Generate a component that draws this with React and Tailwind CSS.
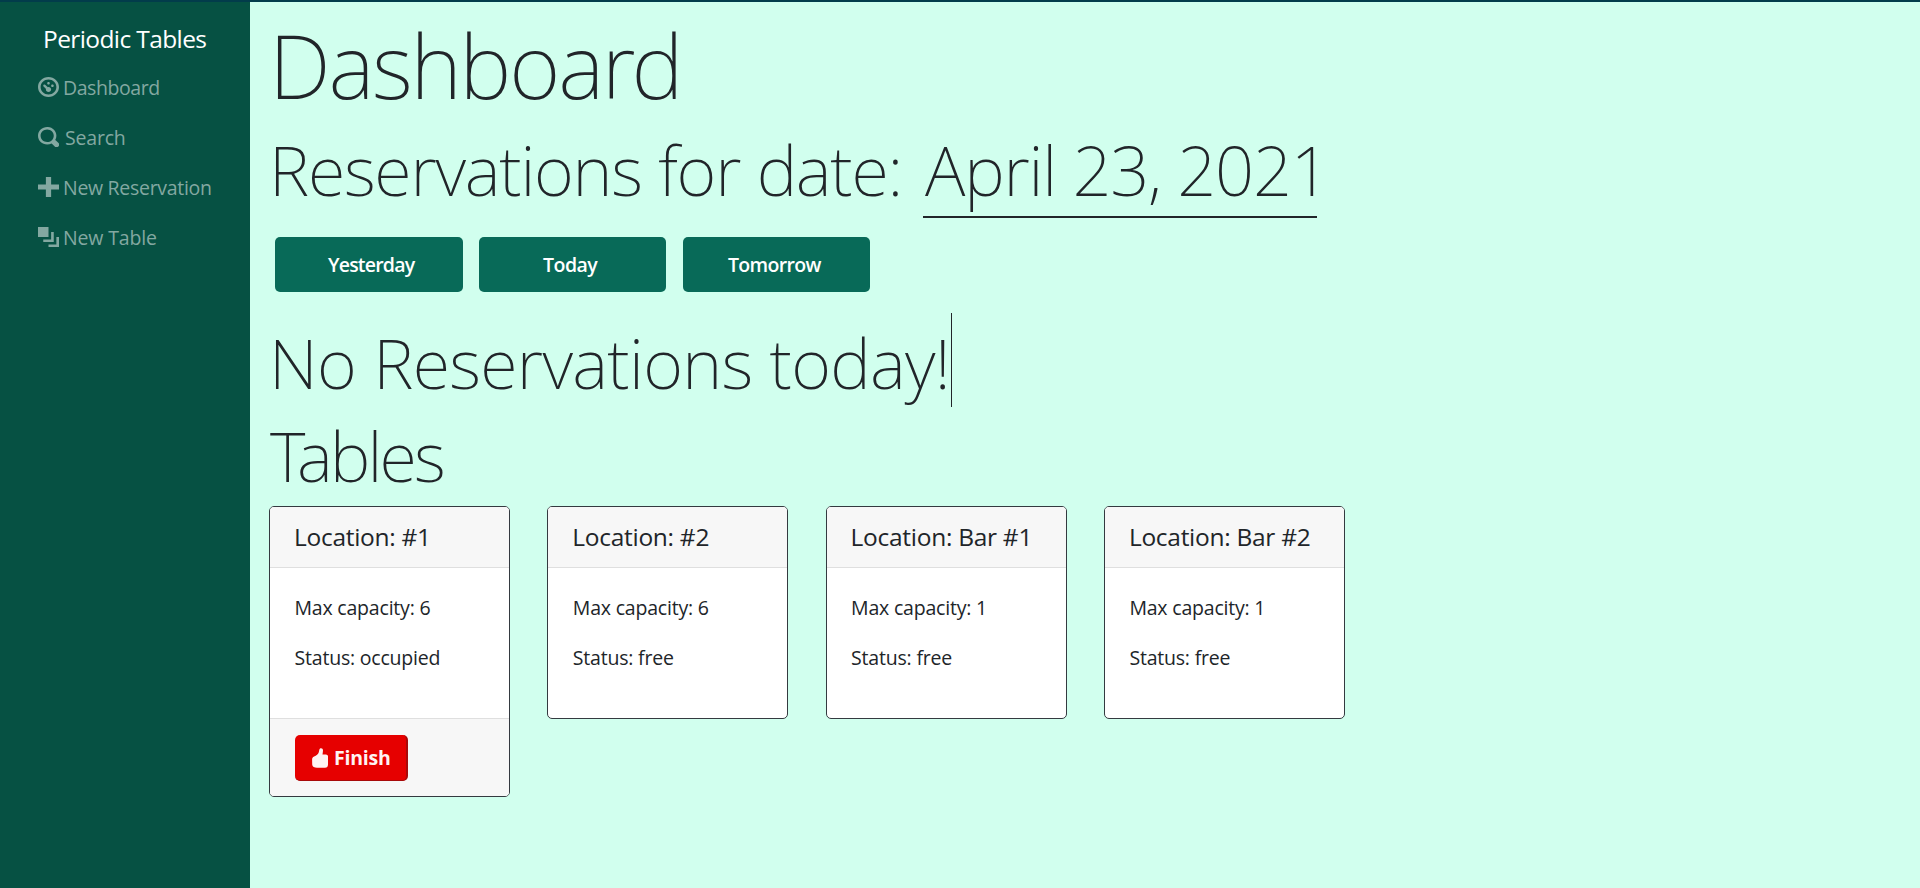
import React from 'react';

const NAV = [
  { label: 'Dashboard', cls: 'tracking-[-0.44px]', d: 'M4 0c-2.2 0-4 1.8-4 4s1.8 4 4 4 4-1.8 4-4-1.8-4-4-4zm0 1c1.66 0 3 1.34 3 3s-1.34 3-3 3-3-1.34-3-3 1.34-3 3-3zm0 1c-.28 0-.5.22-.5.5s.22.5.5.5.5-.22.5-.5-.22-.5-.5-.5zm-1.66 1a.5.5 0 0 0-.19.84l.91.91c-.02.08-.06.16-.06.25 0 .55.45 1 1 1s1-.45 1-1-.45-1-1-1c-.09 0-.17.04-.25.06l-.91-.91a.5.5 0 0 0-.44-.16.5.5 0 0 0-.06 0zm3.16 0c-.28 0-.5.22-.5.5s.22.5.5.5.5-.22.5-.5-.22-.5-.5-.5z' },
  { label: 'Search', cls: 'tracking-[-0.2px] pl-[2px]', d: 'M3.5 0c-1.93 0-3.5 1.57-3.5 3.5s1.57 3.5 3.5 3.5c.59 0 1.17-.14 1.66-.41a1 1 0 0 0 .13.13l1 1a1.02 1.02 0 1 0 1.44-1.44l-1-1a1 1 0 0 0-.16-.13c.27-.49.44-1.06.44-1.66 0-1.93-1.55-3.5-3.5-3.5zm0 1c1.39 0 2.5 1.11 2.5 2.5 0 .66-.24 1.27-.66 1.72-.01.01-.02.02-.03.03a1 1 0 0 0-.13.13c-.44.4-1.04.63-1.69.63-1.39 0-2.5-1.11-2.5-2.5s1.11-2.5 2.5-2.5z' },
  { label: 'New Reservation', cls: 'tracking-[-0.3px]', d: 'M3 0v3h-3v2h3v3h2v-3h3v-2h-3v-3h-2z' },
  { label: 'New Table', cls: 'tracking-[-0.15px]', d: 'M0 0v4h4v-4h-4zm5 2v3h-3v1h4v-4h-1zm2 2v3h-3v1h4v-4h-1z' },
];

const TABLES = [
  { name: '#1', capacity: 6, status: 'occupied' },
  { name: '#2', capacity: 6, status: 'free' },
  { name: 'Bar #1', capacity: 1, status: 'free' },
  { name: 'Bar #2', capacity: 1, status: 'free' },
];

function Sidebar() {
  return (
    <nav className="w-[250px] shrink-0 bg-[#065143] pt-[19px] text-[19.5px]">
      <a className="block pl-[43px] text-[24.5px] leading-[36px] tracking-[-0.6px] text-white">Periodic Tables</a>
      <ul className="mt-[6px]">
        {NAV.map((item) => (
          <li key={item.label} className="flex h-[50px] items-start pl-[38px] text-[#83a8a1]">
            <svg viewBox="0 0 8 8" className="mt-[14px] h-[20px] w-[21px] shrink-0" preserveAspectRatio="none" fill="currentColor">
              <path d={item.d} />
            </svg>
            <span className={'ml-[4px] whitespace-nowrap leading-[50px] ' + item.cls}>{item.label}</span>
          </li>
        ))}
      </ul>
    </nav>
  );
}

function DayButton({ children, className }) {
  return (
    <button className={'h-[55px] rounded-[5px] bg-[#086a58] text-left text-[19.5px] font-semibold leading-[55px] text-white ' + className}>
      {children}
    </button>
  );
}

function TableCard({ table }) {
  return (
    <div className="w-[241px] overflow-hidden rounded-[5px] border border-[#343a40] bg-white">
      <h5 className="h-[61px] border-b border-[#dfdfdf] bg-[#f7f7f7] pl-6 pt-[15px] text-[24.5px] font-medium leading-[30px] tracking-[-0.28px]">
        Location: {table.name}
      </h5>
      <div className="h-[150px] pl-[24.5px] pt-[25px] text-[19.5px] leading-[30px] tracking-[-0.2px]">
        <p>Max capacity: {table.capacity}</p>
        <p className="mt-5">Status: {table.status}</p>
      </div>
      {table.status === 'occupied' && (
        <div className="h-[78px] border-t border-[#dfdfdf] bg-[#f7f7f7] pl-[25px] pt-4">
          <button className="flex h-[46px] w-[113px] items-center rounded-[5px] border-b border-r-2 border-b-[#a80a0a] border-r-[#a80a0a] bg-[#e60000] pl-[17px] text-[19.5px] font-bold tracking-[-0.2px] text-[#fff3f3]">
            <svg viewBox="0 0 16 20" className="mr-[6px] h-5 w-4" fill="currentColor">
              <path d="M8.4.3C9.7-.2 11 .8 11 2.400c0 1.500-.4 2.600-.5 4.100h3.300c1.400 0 2.200.9 2.200 2.100v7.900c0 2-1 3.300-3 3.300H5c-2.500 0-4.800-1-4.800-3.300L.1 11.500c0-1.700.6-2.500 2-3.100C4.500 7.600 6 6.400 6.800 4.300 7.300 2.900 7 1 8.400.3z" />
            </svg>
            Finish
          </button>
        </div>
      )}
    </div>
  );
}

export default function App() {
  return (
    <div className="flex h-[888px] w-[1920px] overflow-hidden border-t-2 border-[#023c4b] bg-[#d1ffee] font-['Open_Sans','Noto_Sans',sans-serif] text-[#212529]">
      <Sidebar />
      <main className="flex-1 pl-[19px] pt-[9px]">
        <h1 className="h-[108px] whitespace-nowrap font-['Noto_Sans'] text-[88px] font-extralight leading-[108px] tracking-[-2.2px]">Dashboard</h1>
        <h2 className="mt-[9px] flex h-[90px] whitespace-nowrap font-['Noto_Sans'] text-[68.5px] font-extralight leading-[84px]">
          <span className="w-[654px] tracking-[-1.25px]">Reservations for date:</span>
          <span className="w-[394px] border-b-2 border-[#212529] pl-[2px] tracking-[-1.2px]">April 23, 2021</span>
        </h2>
        <div className="mt-[19px] flex gap-4 pl-[6px]">
          <DayButton className="w-[188px] pl-[53px] tracking-[-0.8px]">Yesterday</DayButton>
          <DayButton className="w-[187px] pl-[64px] tracking-[-0.5px]">Today</DayButton>
          <DayButton className="ml-px w-[187px] pl-[45px] tracking-[-0.65px]">Tomorrow</DayButton>
        </div>
        <h2 className="mt-[21px] h-[94px] w-[683px] whitespace-nowrap border-r border-[#212529] pt-[5px] font-['Noto_Sans'] text-[68.5px] font-extralight leading-[89px] tracking-[-0.7px]">
          No Reservations today!
        </h2>
        <h2 className="mt-[7px] h-[84px] pl-px font-['Noto_Sans'] text-[68.5px] font-extralight leading-[84px] tracking-[-2.8px]">Tables</h2>
        <div className="mt-2 flex items-start gap-[37.3px]">
          {TABLES.map((table) => (
            <TableCard key={table.name} table={table} />
          ))}
        </div>
      </main>
    </div>
  );
}
